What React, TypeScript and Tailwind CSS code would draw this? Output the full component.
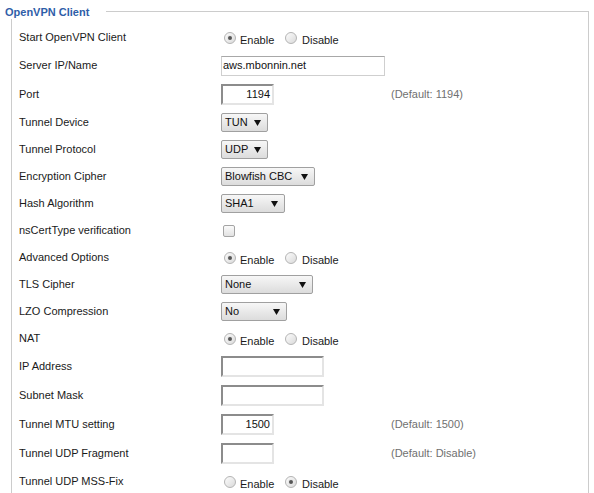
import { FC } from "react";

type Control =
  | { kind: "radio"; enabled: boolean }
  | { kind: "text"; value: string; width: number; inset: boolean }
  | { kind: "select"; value: string; width: number }
  | { kind: "checkbox" };

interface Row {
  label: string;
  control: Control;
  hint?: string;
  tall?: boolean;
}

const rows: Row[] = [
  { label: "Start OpenVPN Client", control: { kind: "radio", enabled: true } },
  {
    label: "Server IP/Name",
    control: { kind: "text", value: "aws.mbonnin.net", width: 164, inset: false },
    tall: true,
  },
  {
    label: "Port",
    control: { kind: "text", value: "1194", width: 53, inset: true },
    hint: "(Default: 1194)",
    tall: true,
  },
  { label: "Tunnel Device", control: { kind: "select", value: "TUN", width: 47 } },
  { label: "Tunnel Protocol", control: { kind: "select", value: "UDP", width: 47 } },
  { label: "Encryption Cipher", control: { kind: "select", value: "Blowfish CBC", width: 94 } },
  { label: "Hash Algorithm", control: { kind: "select", value: "SHA1", width: 64 } },
  { label: "nsCertType verification", control: { kind: "checkbox" } },
  { label: "Advanced Options", control: { kind: "radio", enabled: true } },
  { label: "TLS Cipher", control: { kind: "select", value: "None", width: 92 } },
  { label: "LZO Compression", control: { kind: "select", value: "No", width: 66 } },
  { label: "NAT", control: { kind: "radio", enabled: true } },
  {
    label: "IP Address",
    control: { kind: "text", value: "", width: 103, inset: true },
    tall: true,
  },
  {
    label: "Subnet Mask",
    control: { kind: "text", value: "", width: 103, inset: true },
    tall: true,
  },
  {
    label: "Tunnel MTU setting",
    control: { kind: "text", value: "1500", width: 53, inset: true },
    hint: "(Default: 1500)",
    tall: true,
  },
  {
    label: "Tunnel UDP Fragment",
    control: { kind: "text", value: "", width: 53, inset: true },
    hint: "(Default: Disable)",
    tall: true,
  },
  { label: "Tunnel UDP MSS-Fix", control: { kind: "radio", enabled: false } },
];

const Radio: FC<{ checked: boolean }> = ({ checked }) => (
  <span className="w-[12px] h-[12px] rounded-full border border-[#b4b4b4] bg-gradient-to-br from-[#fcfcfc] to-[#dadada] flex items-center justify-center shrink-0">
    {checked && (
      <span className="w-[6px] h-[6px] rounded-full bg-[#e8e8e8] flex items-center justify-center">
        <span className="w-[4px] h-[4px] rounded-full bg-[#555555]" />
      </span>
    )}
  </span>
);

const RadioPair: FC<{ enabled: boolean }> = ({ enabled }) => (
  <div className="flex items-center pl-[3px]">
    <Radio checked={enabled} />
    <span className="pt-[5px] pl-[4px] w-[49px]">Enable</span>
    <Radio checked={!enabled} />
    <span className="pt-[5px] pl-[5px]">Disable</span>
  </div>
);

const Arrow: FC = () => (
  <svg width="7" height="6" viewBox="0 0 7 6" className="shrink-0">
    <polygon points="0,0 7,0 3.5,6" fill="#111" />
  </svg>
);

const renderControl = (c: Control) => {
  switch (c.kind) {
    case "radio":
      return <RadioPair enabled={c.enabled} />;
    case "checkbox":
      return (
        <span className="block ml-[2px] w-[12px] h-[12px] rounded-[2px] border border-[#a4a4a4] bg-gradient-to-b from-[#fbfbfb] to-[#e2e2e2]" />
      );
    case "select":
      return (
        <div
          className="h-[19px] flex items-center justify-between pl-[3px] pr-[6px] rounded-[2px] border border-[#a0a0a0] bg-gradient-to-b from-[#f7f7f7] to-[#dcdcdc] text-[11px] text-[#111]"
          style={{ width: c.width }}
        >
          <span>{c.value}</span>
          <Arrow />
        </div>
      );
    case "text":
      return c.inset ? (
        <div
          className="h-[21px] flex items-center justify-end pr-[2px] border-2 border-t-[#8c8c8c] border-l-[#8c8c8c] border-r-[#e4e4e4] border-b-[#e4e4e4] bg-white text-[11px] text-[#111]"
          style={{ width: c.width }}
        >
          {c.value}
        </div>
      ) : (
        <div
          className="h-[20px] flex items-center pl-[1px] border border-[#cfcfcf] border-t-[#a8a8a8] bg-white text-[11px] text-[#111]"
          style={{ width: c.width }}
        >
          {c.value}
        </div>
      );
  }
};

const App: FC = () => {
  return (
    <div className="w-[594px] h-[493px] overflow-hidden bg-white pt-[11px] font-['Liberation_Sans',Arial,sans-serif] text-[11px] text-[#1a1a1a]">
      <div className="ml-[11px] w-[578px] h-[500px] border-t border-l border-r border-[#cccccc]">
        <div className="w-fit -mt-[7px] -ml-[7px] pr-[17px] bg-white leading-[14px] font-bold text-[11px] text-[#2f5ea8]">
          OpenVPN Client
        </div>
        <div className="mt-[5px] pl-[7px]">
          {rows.map((row) => (
            <div
              key={row.label}
              className={`flex items-center ${row.tall ? "h-[29px]" : "h-[27px]"}`}
            >
              <div className="w-[202px] shrink-0">{row.label}</div>
              <div className="w-[170px] shrink-0">{renderControl(row.control)}</div>
              {row.hint && <div className="text-[#707070]">{row.hint}</div>}
            </div>
          ))}
        </div>
      </div>
    </div>
  );
};

export default App;
